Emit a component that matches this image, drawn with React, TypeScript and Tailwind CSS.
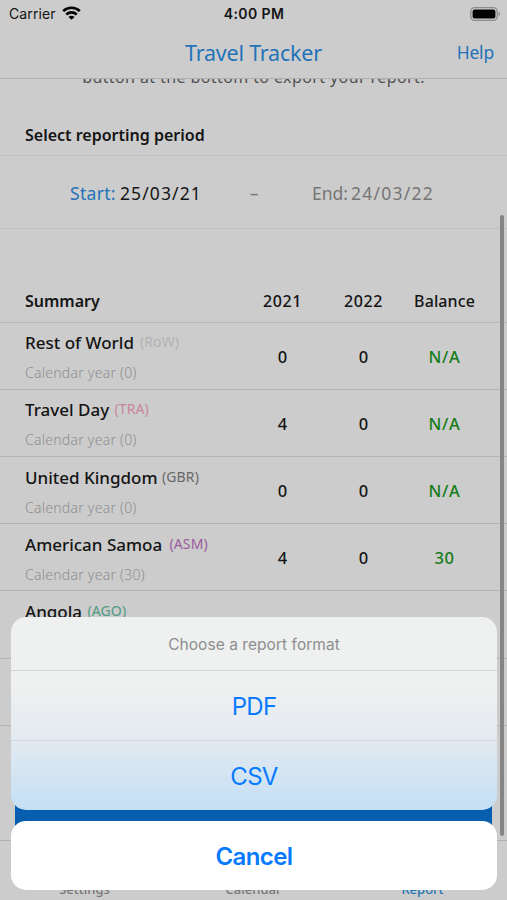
import type { ReactNode } from "react";

type Row = {
  name: string;
  code: string;
  codeClass: string;
  nameClass: string;
  allowance: number;
  first: number;
  second: number;
  balance: string;
};

const rows: Row[] = [
  {
    name: "Rest of World",
    code: "RoW",
    codeClass: "text-[#b2b2b2]",
    nameClass: "w-[109px]",
    allowance: 0,
    first: 0,
    second: 0,
    balance: "N/A",
  },
  {
    name: "Travel Day",
    code: "TRA",
    codeClass: "text-[#c98799]",
    nameClass: "w-[83.5px]",
    allowance: 0,
    first: 4,
    second: 0,
    balance: "N/A",
  },
  {
    name: "United Kingdom",
    code: "GBR",
    codeClass: "text-[#686868]",
    nameClass: "w-[131px]",
    allowance: 0,
    first: 0,
    second: 0,
    balance: "N/A",
  },
  {
    name: "American Samoa",
    code: "ASM",
    codeClass: "text-[#9a5a9e]",
    nameClass: "w-[138.5px]",
    allowance: 30,
    first: 4,
    second: 0,
    balance: "30",
  },
  {
    name: "Angola",
    code: "AGO",
    codeClass: "text-[#4f9a83]",
    nameClass: "w-[56.5px]",
    allowance: 0,
    first: 0,
    second: 0,
    balance: "N/A",
  },
  {
    name: "Anguilla",
    code: "AIA",
    codeClass: "text-[#686868]",
    nameClass: "w-[70px]",
    allowance: 0,
    first: 0,
    second: 0,
    balance: "N/A",
  },
];

const StatusBar = () => {
  return (
    <div className="flex h-7 shrink-0 items-center justify-between pr-[6px] pb-px pl-[9px] font-['Inter',sans-serif]">
      <div className="flex w-[120px] items-center gap-[6px]">
        <span className="text-[14px] tracking-[0.1px]">Carrier</span>
        {/* wifi */}
        <svg width="19" height="14" viewBox="0 0 19 14" fill="none" stroke="#050505" strokeWidth="2.7" className="-mt-px">
          <path d="M1.2 5.1C5.8 0.6 13.2 0.6 17.8 5.1" />
          <path d="M4.3 8.5C7.3 5.7 11.7 5.7 14.7 8.5" />
          <path d="M9.5 13.8L6.5 10.9C8.2 9.4 10.8 9.4 12.5 10.9Z" fill="#050505" stroke="none" />
        </svg>
      </div>
      <span className="mr-[2px] text-[14px] font-semibold tracking-[0.4px]">4:00 PM</span>
      <div className="flex w-[120px] justify-end">
        {/* battery */}
        <svg width="31" height="14" viewBox="0 0 31 14" fill="none">
          <rect x="0.8" y="0.7" width="26.4" height="12.6" rx="3.8" stroke="#8b8b8b" strokeWidth="1.3" />
          <rect x="2.6" y="2.5" width="22.8" height="9" rx="2" fill="#020202" />
          <path d="M28.6 4.8C30.6 5.5 30.6 8.5 28.6 9.2Z" fill="#8b8b8b" />
        </svg>
      </div>
    </div>
  );
};

const SheetButton = ({ children }: { children: ReactNode }) => {
  return (
    <button className="flex h-[70px] w-full items-center justify-center border-t border-[#c9d0d4]/80 pt-[2px] text-[24px] tracking-[-0.7px] text-[#087aff]">
      {children}
    </button>
  );
};

const App = () => {
  return (
    <div className="relative flex h-[900px] w-[507px] flex-col overflow-hidden bg-[#cccccc] font-['Noto_Sans',sans-serif] text-[#141414]">
      <StatusBar />
      <header className="flex h-[51px] shrink-0 items-center border-b border-[#b0b0b0] px-[13px] text-[#2273b8]">
        <div className="w-12" />
        <h1 className="flex-1 text-center text-[21.5px] leading-none tracking-[-0.2px]">Travel Tracker</h1>
        <button className="w-12 pb-px text-right text-[17.5px] tracking-[-0.2px]">Help</button>
      </header>

      <main className="flex h-[761px] shrink-0 flex-col overflow-hidden">
        <div className="flex h-[34px] shrink-0 flex-col justify-start">
          <p className="-mt-[14px] text-center text-[16px] leading-6 tracking-[0.4px] text-[#505050]">
            button at the bottom to export your report.
          </p>
        </div>
        <h2 className="flex h-[43px] shrink-0 items-center border-b border-[#bfbfbf] px-[25px] pt-[2px] text-[16px] font-semibold">
          Select reporting period
        </h2>
        <div className="flex h-[73px] shrink-0 items-center border-b border-[#bfbfbf] pt-[2px] pl-[70px] text-[17.5px]">
          <div className="flex w-[132px] gap-[3px] whitespace-nowrap">
            <span className="w-[47px] tracking-[0.3px] text-[#2273b8]">Start:</span>
            <span className="tracking-[1.1px]">25/03/21</span>
          </div>
          <span className="w-[104px] text-center text-[#777]">–</span>
          <div className="flex gap-[3px] pl-[6px] whitespace-nowrap text-[#757575]">
            <span className="w-9">End:</span>
            <span className="tracking-[1.25px]">24/03/22</span>
          </div>
        </div>

        {/* summary table */}
        <div className="mt-[51.6px] flex h-[42px] shrink-0 items-center border-b border-[#b8b8b8] pb-px pl-[25px] text-[16px] font-medium">
          <h2 className="w-[217px] font-semibold">Summary</h2>
          <span className="w-[81px] text-center tracking-[0.6px]">2021</span>
          <span className="w-[81px] text-center tracking-[0.6px]">2022</span>
          <span className="w-[81px] text-center tracking-[0.1px]">Balance</span>
        </div>
        {rows.map((row) => (
          <div
            key={row.code}
            className="flex h-[67.2px] shrink-0 items-center border-b border-[#b5b5b5] pt-[3px] pl-[25px] text-[16.5px] font-medium"
          >
            <div className="flex w-[217px] flex-col pt-px">
              <div className="flex items-center gap-[6px] leading-[31px] whitespace-nowrap">
                <span className={`text-[17px] ${row.nameClass}`}>{row.name}</span>
                <span className={`pb-[2px] text-[14px] leading-[29px] font-normal tracking-[0.1px] ${row.codeClass}`}>
                  ({row.code})
                </span>
              </div>
              <span className="text-[14px] leading-[30px] font-light tracking-[0.25px] text-[#8e8e8e]">
                Calendar year ({row.allowance})
              </span>
            </div>
            <span className="w-[81px] text-center">{row.first}</span>
            <span className="w-[81px] text-center">{row.second}</span>
            <span className="w-[81px] text-center tracking-[0.6px] text-[#147c18]">{row.balance}</span>
          </div>
        ))}
      </main>

      <nav className="flex h-[60px] shrink-0 items-end border-t border-[#b0b0b0] pb-[3px] text-[13px] leading-4 font-medium text-[#777]">
        <span className="w-[169px] text-center">Settings</span>
        <span className="w-[169px] text-center">Calendar</span>
        <span className="w-[169px] text-center text-[#2273b8]">Report</span>
      </nav>

      {/* scroll indicator */}
      <div className="absolute top-[215px] right-[3px] h-[621px] w-1 rounded-full bg-[#858585]" />

      {/* export button behind the sheet */}
      <div className="absolute top-[780px] left-[15px] h-[60px] w-[477px] rounded bg-[#075eae]" />

      {/* action sheet */}
      <div className="absolute bottom-[10px] left-[11px] w-[486px] font-['Inter',sans-serif]">
        <div className="overflow-hidden rounded-[15px] bg-linear-to-b from-[#eff0f0] from-35% via-[#e4ebf1] via-62% to-[#c4dff5] to-100%">
          <p className="flex h-[53px] items-center justify-center pt-[2px] text-[15.5px] tracking-[0.05px] text-[#8c8e8f]">
            Choose a report format
          </p>
          <SheetButton>PDF</SheetButton>
          <SheetButton>CSV</SheetButton>
        </div>
        <button className="mt-[11px] flex h-[69px] w-full items-center justify-center rounded-[15px] bg-white pt-[2px] text-[24px] font-semibold tracking-[-0.6px] text-[#087aff]">
          Cancel
        </button>
      </div>
    </div>
  );
};

export default App;
